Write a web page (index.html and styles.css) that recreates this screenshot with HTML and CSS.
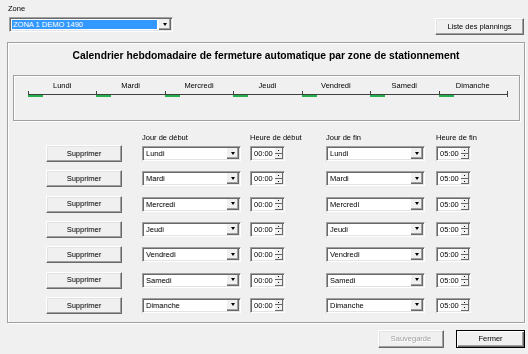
FILE: index.html
```html
<!DOCTYPE html>
<html lang="fr">
<head>
<meta charset="utf-8">
<title>Calendrier hebdomadaire</title>
<link rel="stylesheet" href="styles.css">
</head>
<body>
<div class="dialog">
  <div class="top">
    <div class="zone">
      <div class="lbl">Zone</div>
      <div class="combo zone-combo">
        <span class="value selected">ZONA 1 DEMO 1490</span>
        <span class="dd"><i class="tri"></i></span>
      </div>
    </div>
    <button class="btn btn-list">Liste des plannings</button>
  </div>

  <div class="group">
    <div class="title">Calendrier hebdomadaire de fermeture automatique par zone de stationnement</div>
    <div class="timeline">
      <div class="days">
        <div class="day"><div class="dlabel">Lundi</div><div class="axis"></div><div class="green"></div></div>
        <div class="day"><div class="dlabel">Mardi</div><div class="axis"></div><div class="green"></div></div>
        <div class="day"><div class="dlabel">Mercredi</div><div class="axis"></div><div class="green"></div></div>
        <div class="day"><div class="dlabel">Jeudi</div><div class="axis"></div><div class="green"></div></div>
        <div class="day"><div class="dlabel">Vendredi</div><div class="axis"></div><div class="green"></div></div>
        <div class="day"><div class="dlabel">Samedi</div><div class="axis"></div><div class="green"></div></div>
        <div class="day"><div class="dlabel">Dimanche</div><div class="axis"></div><div class="green"></div></div>
        <div class="end"></div>
      </div>
    </div>

    <div class="cols head">
      <div></div><div>Jour de début</div><div>Heure de début</div><div>Jour de fin</div><div>Heure de fin</div>
    </div>
    <div class="cols rows">
      <button class="btn sup">Supprimer</button>
      <div class="combo day-combo"><span class="value">Lundi</span><span class="dd"><i class="tri"></i></span></div>
      <div class="combo spinner"><span class="value">00:00</span><span class="spin"><span class="sb"><i class="up"></i></span><span class="sb"><i class="down"></i></span></span></div>
      <div class="combo day-combo"><span class="value">Lundi</span><span class="dd"><i class="tri"></i></span></div>
      <div class="combo spinner"><span class="value">05:00</span><span class="spin"><span class="sb"><i class="up"></i></span><span class="sb"><i class="down"></i></span></span></div>

      <button class="btn sup">Supprimer</button>
      <div class="combo day-combo"><span class="value">Mardi</span><span class="dd"><i class="tri"></i></span></div>
      <div class="combo spinner"><span class="value">00:00</span><span class="spin"><span class="sb"><i class="up"></i></span><span class="sb"><i class="down"></i></span></span></div>
      <div class="combo day-combo"><span class="value">Mardi</span><span class="dd"><i class="tri"></i></span></div>
      <div class="combo spinner"><span class="value">05:00</span><span class="spin"><span class="sb"><i class="up"></i></span><span class="sb"><i class="down"></i></span></span></div>

      <button class="btn sup">Supprimer</button>
      <div class="combo day-combo"><span class="value">Mercredi</span><span class="dd"><i class="tri"></i></span></div>
      <div class="combo spinner"><span class="value">00:00</span><span class="spin"><span class="sb"><i class="up"></i></span><span class="sb"><i class="down"></i></span></span></div>
      <div class="combo day-combo"><span class="value">Mercredi</span><span class="dd"><i class="tri"></i></span></div>
      <div class="combo spinner"><span class="value">05:00</span><span class="spin"><span class="sb"><i class="up"></i></span><span class="sb"><i class="down"></i></span></span></div>

      <button class="btn sup">Supprimer</button>
      <div class="combo day-combo"><span class="value">Jeudi</span><span class="dd"><i class="tri"></i></span></div>
      <div class="combo spinner"><span class="value">00:00</span><span class="spin"><span class="sb"><i class="up"></i></span><span class="sb"><i class="down"></i></span></span></div>
      <div class="combo day-combo"><span class="value">Jeudi</span><span class="dd"><i class="tri"></i></span></div>
      <div class="combo spinner"><span class="value">05:00</span><span class="spin"><span class="sb"><i class="up"></i></span><span class="sb"><i class="down"></i></span></span></div>

      <button class="btn sup">Supprimer</button>
      <div class="combo day-combo"><span class="value">Vendredi</span><span class="dd"><i class="tri"></i></span></div>
      <div class="combo spinner"><span class="value">00:00</span><span class="spin"><span class="sb"><i class="up"></i></span><span class="sb"><i class="down"></i></span></span></div>
      <div class="combo day-combo"><span class="value">Vendredi</span><span class="dd"><i class="tri"></i></span></div>
      <div class="combo spinner"><span class="value">05:00</span><span class="spin"><span class="sb"><i class="up"></i></span><span class="sb"><i class="down"></i></span></span></div>

      <button class="btn sup">Supprimer</button>
      <div class="combo day-combo"><span class="value">Samedi</span><span class="dd"><i class="tri"></i></span></div>
      <div class="combo spinner"><span class="value">00:00</span><span class="spin"><span class="sb"><i class="up"></i></span><span class="sb"><i class="down"></i></span></span></div>
      <div class="combo day-combo"><span class="value">Samedi</span><span class="dd"><i class="tri"></i></span></div>
      <div class="combo spinner"><span class="value">05:00</span><span class="spin"><span class="sb"><i class="up"></i></span><span class="sb"><i class="down"></i></span></span></div>

      <button class="btn sup">Supprimer</button>
      <div class="combo day-combo"><span class="value">Dimanche</span><span class="dd"><i class="tri"></i></span></div>
      <div class="combo spinner"><span class="value">00:00</span><span class="spin"><span class="sb"><i class="up"></i></span><span class="sb"><i class="down"></i></span></span></div>
      <div class="combo day-combo"><span class="value">Dimanche</span><span class="dd"><i class="tri"></i></span></div>
      <div class="combo spinner"><span class="value">05:00</span><span class="spin"><span class="sb"><i class="up"></i></span><span class="sb"><i class="down"></i></span></span></div>
    </div>
  </div>

  <div class="bottom">
    <button class="btn btn-save" disabled>Sauvegarde</button>
    <button class="btn btn-close">Fermer</button>
  </div>
</div>
</body>
</html>
```
FILE: styles.css
```css
* { box-sizing: border-box; }
html, body { margin: 0; padding: 0; }
body {
  width: 528px;
  height: 354px;
  overflow: hidden;
  background: #f0f0f0;
  font-family: "Liberation Sans", Arial, sans-serif;
  font-size: 7.5px;
  color: #000;
}

/* neutral (grey) anti-aliasing for small text */
.lbl, .btn-list, .title, .dlabel, .cols, .bottom { filter: grayscale(1); }

/* top area */
.top {
  display: flex;
  justify-content: space-between;
  align-items: flex-start;
  height: 36px;
  padding: 0 4px 0 9px;
}
.zone { padding-top: 4px; }
.lbl { line-height: 10px; margin-left: -1px; margin-bottom: 3px; }

/* buttons */
.btn {
  font-family: inherit;
  font-size: 7.5px;
  color: #000;
  background: #f0f0f0;
  margin: 0;
  padding: 0;
  border: 1px solid;
  border-color: #fff #696969 #696969 #fff;
  box-shadow: inset -1px -1px 0 #a0a0a0, inset 1px 1px 0 #e3e3e3;
  line-height: 1;
  text-align: center;
  white-space: nowrap;
}
.btn-list { width: 89px; height: 17px; margin-top: 18px; }
.sup { width: 76px; height: 17px; }
.btn-save { width: 66px; height: 18px; color: #a0a0a0; text-shadow: 1px 1px 0 #fff; }
.btn-close {
  width: 69px;
  height: 18px;
  border: 1px solid #000;
  box-shadow: inset 1px 1px 0 #fff, inset -1px -1px 0 #696969, inset -2px -2px 0 #a0a0a0;
}

/* sunken fields */
.combo {
  display: flex;
  align-items: stretch;
  background: #fff;
  border: 1px solid;
  border-color: #a0a0a0 #fff #fff #a0a0a0;
  box-shadow: inset 1px 1px 0 #696969, inset -1px -1px 0 #e3e3e3;
  padding: 1px;
  height: 15px;
}
.value {
  flex: 1;
  line-height: 11px;
  padding-left: 2px;
  white-space: nowrap;
  overflow: hidden;
}
.zone-combo { width: 164px; height: 15px; }
.zone-combo .selected {
  background: #3399ff;
  color: #fff;
  margin: 1px 2px 1px 1px;
  line-height: 9px;
  padding-left: 1px;
}
.dd {
  width: 12px;
  background: #f0f0f0;
  border-right: 1px solid #696969;
  border-bottom: 1px solid #696969;
  box-shadow: inset -1px -1px 0 #a0a0a0;
  display: flex;
  align-items: center;
  justify-content: center;
}
.tri {
  width: 0;
  height: 0;
  border-left: 2.5px solid transparent;
  border-right: 2.5px solid transparent;
  border-top: 3px solid #000;
}

/* spinner */
.spin {
  width: 8px;
  display: flex;
  flex-direction: column;
}
.sb {
  flex: 1;
  background: #f0f0f0;
  border-right: 1px solid #696969;
  border-bottom: 1px solid #696969;
  display: flex;
  align-items: center;
  justify-content: center;
}
.up, .down { width: 1px; height: 1px; background: #000; }

/* group */
.group {
  margin: 6px 3px 0 7px;
  border: 1px solid #a0a0a0;
  box-shadow: inset 1px 1px 0 #fff, 1px 1px 0 #fff;
  padding: 0 0 8px 0;
}
.title {
  margin-top: 7px;
  line-height: 12px;
  text-align: center;
  font-weight: bold;
  font-size: 10.3px;
}

/* timeline */
.timeline {
  margin: 13px 4px 0 5px;
  height: 46px;
  border: 1px solid #a0a0a0;
  box-shadow: inset 1px 1px 0 #fff, 1px 1px 0 #fff;
  padding: 5px 0 0 14px;
}
.days { display: flex; width: 480px; }
.day { flex: 1 1 0; display: flex; flex-direction: column; }
.dlabel { line-height: 10px; text-align: center; }
.axis {
  height: 4px;
  border-left: 1px solid #404040;
  border-bottom: 1px solid #404040;
}
.green { width: 15px; height: 2px; background: #22b14c; }
.end {
  width: 1px;
  height: 6px;
  margin-top: 10px;
  background: #404040;
}

/* grid */
.cols {
  display: grid;
  grid-template-columns: 96px 108px 76px 110px 60px;
  padding-left: 38px;
  white-space: nowrap;
}
.head { margin-top: 12px; line-height: 10px; }
.rows { margin-top: 2px; row-gap: 8.33px; grid-auto-rows: 17px; }
.rows .combo { height: 15px; margin-top: 1px; }
.day-combo { width: 99px; }
.spinner { width: 35px; }

/* bottom */
.bottom {
  display: flex;
  justify-content: flex-end;
  gap: 12px;
  padding: 7px 3px 0 0;
}
```
